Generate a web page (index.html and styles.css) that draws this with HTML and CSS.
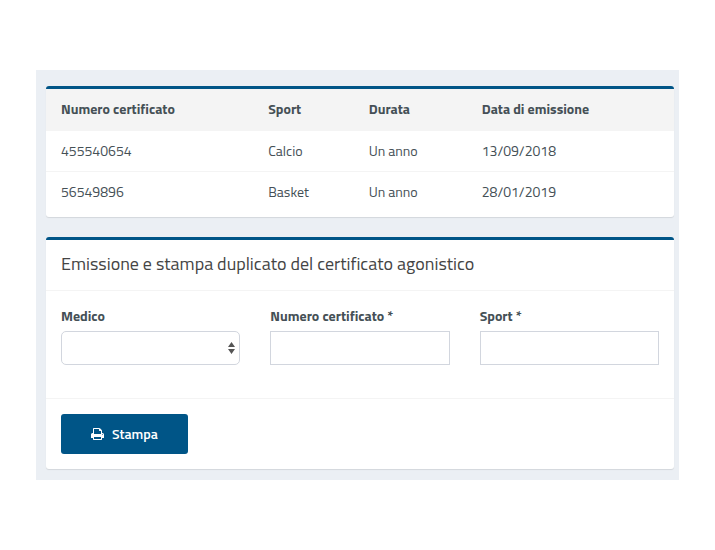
FILE: index.html
```html
<!DOCTYPE html>
<html lang="it">
<head>
    <meta charset="UTF-8">
    <meta name="viewport" content="width=device-width, initial-scale=1.0">
    <title>Certificato agonistico</title>
    <link rel="stylesheet" href="styles.css">
</head>
<body>
    <main class="content">
        <section class="box box-list">
            <table class="table">
                <thead>
                    <tr>
                        <th class="col-wide">Numero certificato</th>
                        <th class="col-sport">Sport</th>
                        <th class="col-durata">Durata</th>
                        <th class="col-wide">Data di emissione</th>
                    </tr>
                </thead>
                <tbody>
                    <tr>
                        <td>455540654</td>
                        <td>Calcio</td>
                        <td>Un anno</td>
                        <td>13/09/2018</td>
                    </tr>
                    <tr>
                        <td>56549896</td>
                        <td>Basket</td>
                        <td>Un anno</td>
                        <td>28/01/2019</td>
                    </tr>
                </tbody>
            </table>
        </section>

        <form class="box">
            <h1 class="box-header">Emissione e stampa duplicato del certificato agonistico</h1>
            <div class="box-body">
                <div class="field">
                    <label for="medico">Medico</label>
                    <div class="select-wrap">
                        <select id="medico" class="control select">
                            <option value=""></option>
                        </select>
                        <svg class="arrows" viewBox="0 0 7 12" aria-hidden="true">
                            <path d="M0 5L3.5 0L7 5zM0 7h7L3.5 12z"/>
                        </svg>
                    </div>
                </div>
                <div class="field">
                    <label for="numero">Numero certificato *</label>
                    <input type="text" id="numero" class="control" required>
                </div>
                <div class="field">
                    <label for="sport">Sport *</label>
                    <input type="text" id="sport" class="control" required>
                </div>
            </div>
            <div class="box-footer">
                <button class="btn" type="button">
                    <svg class="icon" viewBox="0 128 1664 1536" aria-hidden="true">
                        <path d="M384 1536h896v-256h-896v256zM384 896h896v-384h-160q-40 0-68-28t-28-68v-160h-640v640zM1536 960q0-26-19-45t-45-19-45 19-19 45 19 45 45 19 45-19 19-45zM1664 960v416q0 13-9.500 22.500t-22.500 9.500h-224v160q0 40-28 68t-68 28h-960q-40 0-68-28t-28-68v-160h-224q-13 0-22.500-9.500t-9.500-22.500v-416q0-79 56.500-135.500t135.500-56.500h64v-544q0-40 28-68t68-28h672q40 0 88 20t76 48l152 152q28 28 48 76t20 88v256h64q79 0 135.500 56.500t56.500 135.500z"/>
                    </svg>
                    Stampa
                </button>
            </div>
        </form>
    </main>
</body>
</html>
```

FILE: styles.css
```css
* {
    box-sizing: border-box;
}
body {
    margin: 70px 36px;
    background-color: #fff;
    color: #455056;
    font-family: "Titillium Web", Roboto, sans-serif;
    font-size: 14px;
    line-height: 20px;
}
.content {
    display: flex;
    flex-direction: column;
    gap: 20px;
    padding: 16px 5px 11px 10px;
    background-color: #ebeff4;
}
.box {
    background-color: #fff;
    border-top: 3px solid #005587;
    border-radius: 3px;
    box-shadow: 0 1px 1px rgba(0, 0, 0, 0.1);
}
.box-list {
    padding-bottom: 5px;
}
.table {
    width: 100%;
    table-layout: fixed;
    border-collapse: collapse;
}
.table th,
.table td {
    padding: 10px 15px;
    text-align: left;
}
.table th {
    padding: 10px 15px 12px;
    background-color: #f4f4f4;
    font-weight: 700;
}
.table tr + tr td {
    border-top: 1px solid #f4f4f4;
}
.col-wide { width: 33%; }
.col-sport { width: 16%; }
.col-durata { width: 18%; }
.box-header {
    margin: 0;
    padding: 14px 15px 16px;
    border-bottom: 1px solid #f4f4f4;
    color: #444;
    font-size: 18px;
    font-weight: 400;
}
.box-body {
    display: grid;
    grid-template-columns: repeat(3, 1fr);
    gap: 30px;
    padding: 15px 15px 33px;
}
.field label {
    display: block;
    margin-bottom: 5px;
    font-weight: 700;
}
.control {
    display: block;
    width: 100%;
    height: 34px;
    padding: 6px 12px;
    border: 1px solid #d2d6de;
    border-radius: 0;
    background-color: #fff;
    color: #555;
    font: inherit;
}
.select-wrap {
    position: relative;
}
.select {
    appearance: none;
    border-radius: 5px;
}
.arrows {
    position: absolute;
    top: 11px;
    right: 5px;
    width: 7px;
    height: 12px;
    fill: #555;
    pointer-events: none;
}
.box-footer {
    padding: 15px;
    border-top: 1px solid #f4f4f4;
}
.btn {
    display: inline-flex;
    align-items: center;
    gap: 8px;
    height: 40px;
    padding: 0 30px;
    border: 0;
    border-radius: 3px;
    background-color: #005587;
    color: #fff;
    font: inherit;
    font-weight: 600;
    cursor: pointer;
}
.icon {
    width: 13px;
    height: 12px;
    fill: #fff;
}
```
